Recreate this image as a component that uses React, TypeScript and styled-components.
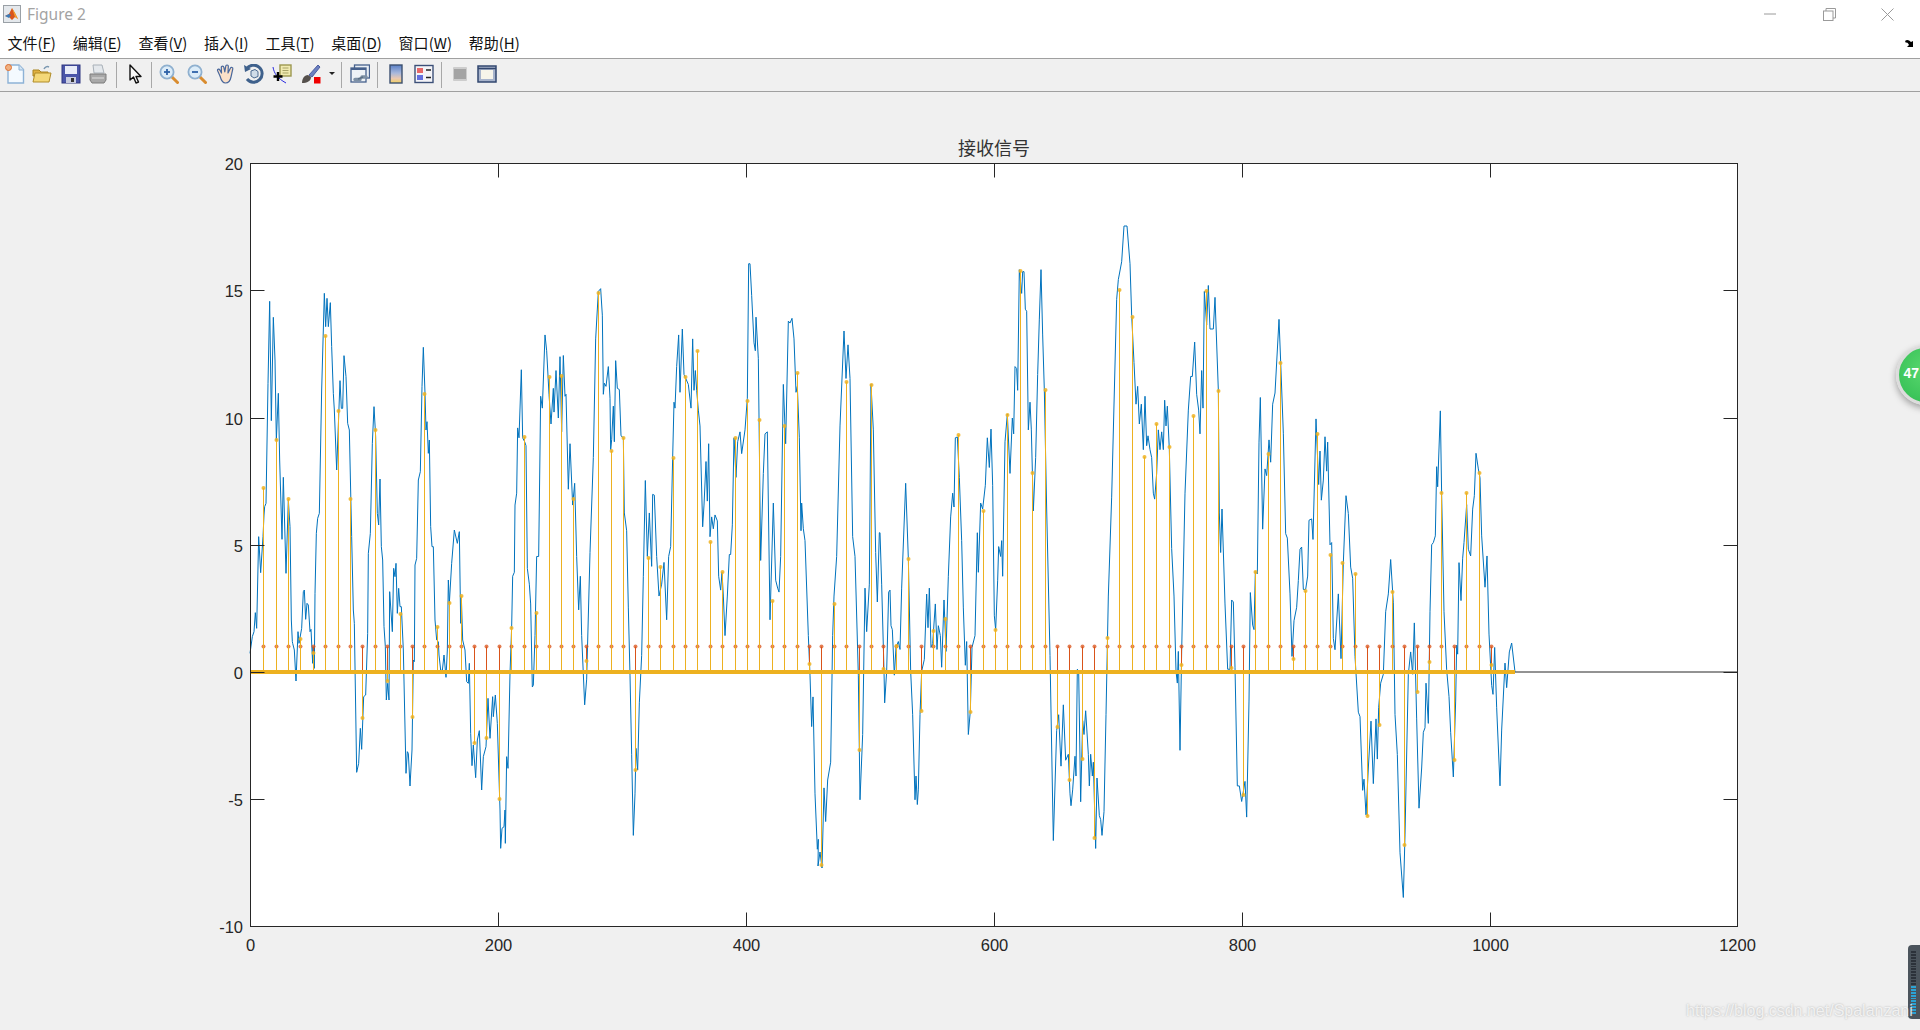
// App.tsx

import React from 'react';
import styled, { createGlobalStyle } from 'styled-components';

const GlobalStyle = createGlobalStyle`
  html, body {
    margin: 0;
    padding: 0;
    background: #f0f0f0;
    overflow: hidden;
  }
`;

const Window = styled.div`
  position: relative;
  width: 1920px;
  height: 1030px;
  overflow: hidden;
  display: flex;
  flex-direction: column;
  font-family: "Noto Sans", "Noto Sans CJK SC", sans-serif;
`;

const TitleBar = styled.div`
  height: 28px;
  background: #fff;
  display: flex;
  align-items: center;
  justify-content: space-between;
  padding: 0 3px;
`;

const TitleLeft = styled.div`
  display: flex;
  align-items: center;
  gap: 6px;
`;

const TitleText = styled.span`
  font-size: 15.500px;
  color: #a3a3a3;
`;

const Controls = styled.div`
  display: flex;
`;

const ControlButton = styled.div`
  width: 58.500px;
  height: 28px;
  display: flex;
  align-items: center;
  justify-content: center;
`;

const MenuBar = styled.div`
  height: 30px;
  box-sizing: content-box;
  background: #fff;
  border-bottom: 1px solid #a0a0a0;
  display: flex;
  align-items: center;
  justify-content: space-between;
  padding-right: 5px;
`;

const MenuList = styled.div`
  display: flex;
  margin-left: -1px;
  margin-top: -2px;
`;

const MenuItem = styled.span`
  padding: 0 8.400px;
  font-family: "Noto Sans CJK SC", sans-serif;
  font-size: 15px;
  color: #111;
  white-space: nowrap;

  u {
    text-underline-offset: 2px;
  }
`;

const Toolbar = styled.div`
  height: 32px;
  background: #f0f0f0;
  border-bottom: 1px solid #a0a0a0;
  display: flex;
  align-items: center;
`;

const Tool = styled.svg<{ $gap: number }>`
  width: 20px;
  height: 20px;
  margin-left: ${(p) => p.$gap}px;
  margin-bottom: 3px;
  flex: none;
`;

const DropArrow = styled.div<{ $gap: number }>`
  width: 0;
  height: 0;
  margin-left: ${(p) => p.$gap}px;
  margin-bottom: 3px;
  border-left: 3px solid transparent;
  border-right: 3px solid transparent;
  border-top: 3px solid #222;
`;

const Separator = styled.div<{ $gap: number }>`
  width: 1px;
  height: 26px;
  margin-left: ${(p) => p.$gap}px;
  background: #a8a8a8;
  flex: none;
`;

const FigureArea = styled.div`
  flex: 1;
  background: #f0f0f0;
`;

const Plot = styled.svg`
  display: block;
  width: 1920px;
  height: 938px;
`;

const TickLabel = styled.text`
  font-family: "Liberation Sans", sans-serif;
  font-size: 16.500px;
  fill: #262626;
`;

const PlotTitle = styled.text`
  font-family: "Noto Sans CJK SC", sans-serif;
  font-size: 18px;
  fill: #333;
  text-anchor: middle;
`;

const Badge = styled.div`
  position: absolute;
  left: 1896px;
  top: 345px;
  width: 60px;
  height: 60px;
  box-sizing: border-box;
  border-radius: 50%;
  border: 3px solid #dcdcdc;
  background: radial-gradient(circle at 50% 40%, #5ad86f, #3cc45a 70%, #33b04e);
  box-shadow: 0 3px 7px rgba(0, 0, 0, 0.35);
  color: #fff;
  font-family: "Liberation Sans", sans-serif;
  font-size: 14px;
  font-weight: bold;
  line-height: 51px;
  padding-left: 4.500px;
`;

const Meter = styled.div`
  position: absolute;
  left: 1908px;
  top: 945px;
  width: 20px;
  height: 74px;
  box-sizing: border-box;
  padding: 6px 12px 5px 3px;
  border-radius: 4px;
  background: #4b545c;
  display: flex;
  flex-direction: column;
  gap: 1px;
`;

const MeterCell = styled.div<{ $on: boolean }>`
  flex: 1;
  background: ${(p) => (p.$on ? '#2ba3d4' : '#2c323a')};
`;

const Watermark = styled.div`
  position: absolute;
  left: 1686px;
  top: 1002px;
  font-family: "Liberation Sans", sans-serif;
  font-size: 16px;
  color: rgba(255, 255, 255, 0.75);
  text-shadow: 0 0 2px rgba(120, 120, 120, 0.55);
  white-space: nowrap;
`;

// traced from the figure: crop origin + crop coordinates
type Pt = [number, number];
const seg = (ox: number, oy: number, sy: number, s: string): Pt[] =>
  s.split(' ').map((p) => {
    const [x, y] = p.split(',').map(Number);
    return [ox + x / 3, oy + y * sy];
  });
const abs = (s: string): Pt[] =>
  s.split(' ').map((p) => p.split(',').map(Number) as Pt);

const a = (s: string) => seg(240, 160, 1 / 3, s);
const b = (s: string) => seg(200, 600, 1 / 3, s);
const c = (s: string) => seg(480, 240, 0.3956, s);
const d = (s: string) => seg(860, 240, 0.3956, s);
const e = (s: string) => seg(1240, 210, 0.4464, s);

const signal: Pt[] = [
  ...a('30,1480 37,1430 42,1415 46,1358 50,1405 56,1130 62,1238 69,1130 72,1065 74,1040 78,1030 84,670 89,424 94,782 100,472 105,600 109,840 115,700 119,900 126,1138 130,952 138,1240 145,1020 150,1100 154,1380 157,1445'),
  ...b('278,130 283,150 288,243 294,95 297,130 305,85'),
  ...a('190,1295 193,1290 197,1378 201,1330 205,1335 210,1415 213,1408 218,1510'),
  ...b('339,140 343,205'),
  ...a('225,1300 229,1120 233,1075 238,1060 245,690 253,400 257,500 261,415 265,500 271,428 275,560 280,700 283,750 290,930 300,662 304,745 308,745 312,587 318,650 323,790 328,810 335,1130 340,1350 343,1390'),
  ...b('470,517 476,490 481,385 485,448 491,290 497,285 503,100'),
  ...a('385,1180 391,1120 397,850 402,740 407,830 412,1060 416,1095 420,957 424,1160 428,1200 432,1400 436,1460'),
  ...b('559,300 563,250 567,300'),
  ...a('449,1295 457,1415 461,1225 465,1250 468,1210 472,1360 476,1285 480,1340 484,1340 490,1470'),
  ...b('618,520 622,455 625,460 630,558 636,450 640,180 643,185'),
  ...a('525,1215 530,1195 535,960 541,935 546,680 550,562 555,700 558,810 561,785 565,880 568,840 572,1100 576,1160 580,1160 585,1380 590,1440'),
  ...b('715,125 717,165 722,210 727,212 732,165 738,232 742,150'),
  ...a('625,1260 628,1330 635,1210 643,1110 652,1150 658,1115 662,1390 664,1310 668,1440'),
  ...b('795,150 800,245 805,250 808,190 812,400 816,497 820,435 827,533 832,420 838,392 845,570 850,470 858,440 864,295 870,415 878,290 880,350 886,285 892,370 900,630 902,745 906,685 912,680 915,630 916,730 920,470 924,505 930,220 935,80'),
  ...c('98,850 103,840 105,670 110,640 113,475 117,500 124,328 128,500 134,510 138,520 142,830 148,870 152,920 157,1130 160,1125 165,1000 170,800 176,800 182,395 187,425 195,240 200,280 207,390 213,465 220,375 222,435 228,330 235,450 240,295 245,485 250,292 255,395 258,390 265,630 270,515 278,670 284,615 290,800 296,935 301,850 305,1000 314,1175 320,1110 330,790 340,550 347,250 355,130 362,123 367,190 370,390 373,362 378,370 385,320 390,400 392,530 395,505 400,420 403,510 407,305 412,375 418,378 423,495 430,500 433,690 440,735 445,930 450,1100 455,1300 460,1505 465,1400 468,1285 473,1340 478,1170 485,1050 490,850 496,608 502,800 508,690 515,825 518,643 523,645 530,800 537,900 545,870 552,815 560,960 566,800 572,775 578,550 582,410 585,425 590,320 596,240 600,385 607,225 612,340 625,365 633,425 638,250 642,380 646,330 650,380 655,430 660,470 668,725 672,670 678,560 682,660 686,515 690,750 695,700 700,730 705,695 712,710 716,850 722,885 726,840 730,900 735,1000 742,900 748,795 752,795 757,720 762,500 768,600 773,510 780,485 785,540 795,480 802,400 806,60 810,60 815,140 822,260 826,280 828,195 835,300 842,810 850,590 855,490 862,485 870,960 880,665 887,860 893,880 897,890 902,800 910,365 917,515 925,205 930,210 936,198 942,250 948,385 952,370 958,500 963,735 965,665 970,730 975,760 985,1000 990,1100 995,1230 999,1155 1005,1400 1012,1540 1015,1515'),
  ...abs('818,866 820,852 822,868'),
  ...c('1032,1385 1037,1470 1043,1365 1052,1320 1058,1000 1062,900 1070,800 1080,470 1092,230 1098,350 1104,265 1110,350 1118,750 1125,800 1135,1100 1140,1415 1148,1250 1155,880 1160,990 1168,870'),
  ...d('33,365 40,480 47,790 52,915 58,740 60,740 65,870 72,1090 74,1170 80,1090 86,890 90,885 93,975 97,985 103,1100 108,1030 115,1015 120,1035 125,880 137,615 145,805 152,1090 158,1200 165,1415 168,1355 172,1427 175,1390 180,1200 185,1090 193,1060 200,895 204,980 208,880 213,1030 218,1020 226,920 231,1035 235,975 241,1000 245,1080 252,910 258,1040 265,850 272,700 278,640 282,675 286,500 292,498 298,600 305,760 310,930 316,1075 320,1015 325,1250 331,1190 336,1030 345,1000 352,740 355,840 362,665 368,680 376,620 382,500 388,575 393,478 398,620 403,950 407,985 413,860 416,775 422,800 425,760 428,850 435,510 442,440 450,590 457,450 461,490 465,320 470,325 473,380 478,75 485,135 488,80 492,80 496,175 500,180 505,480 510,410 514,480 520,685 527,550 533,340 538,200 543,75 548,240 553,380 560,680 570,1050 580,1518 590,1240 596,1200 603,1330 610,1175 617,1315 625,1300 630,1400 633,1430 638,1390 645,1305 648,1355 652,1085 656,1090 662,1420 668,1215 672,1250 677,1190 685,1300 688,1380 692,1300 697,1355 700,1320 707,1538 711,1360 718,1455 722,1465 726,1505 732,1445 738,1200 745,900 755,650 770,150 775,100 785,55'),
  ...abs('1124,226 1127,226'),
  ...d('810,60 815,190 822,310 828,415 833,370 838,465 844,415 850,530 855,395 860,520 864,495 870,530 875,550 880,640 884,655 890,590 895,480 900,530 905,485 910,530 914,405 918,470 922,420 928,530 935,780 942,900 948,1090 952,1120 955,1040 960,1290 965,1040 975,640 985,430 992,345 997,345 1004,258 1010,390 1016,430 1020,490 1025,330 1029,425 1033,130 1040,215 1045,115 1050,225 1060,225 1065,145 1075,380 1078,690 1082,790 1086,680 1095,920 1103,1085 1110,1085 1115,910 1120,915 1125,1080 1132,1380 1138,1380'),
  ...e('5,1325 15,1280 20,1360 27,1100 31,857 38,930 42,940 46,810 52,815 57,520 61,420 68,715 75,580 80,595 87,515 92,565 98,435 105,410 117,245 122,340 130,500 137,725 142,735 150,860 156,1000 162,920 170,890 175,830 180,760 185,755 190,850 197,850 203,820 207,695 215,692 219,738 228,468 236,615 240,540 244,650 250,605 255,508 260,585 263,520 270,750 275,745 280,960 285,985 295,860 303,1005 310,790 318,640 325,680 332,800 338,825 345,1000 355,1125 360,1135 368,1300 372,1275 378,1355 385,1250 393,1145 400,1285 408,1140 412,1230 416,1115 422,1060 430,1040 437,900 445,860 452,783 460,880 465,1130 472,1220 480,1440 490,1540 495,1400 505,1040 512,990 518,1040 523,925 530,1140 537,1340 545,1250 550,1170 555,1160 558,1060 565,1150 570,900 575,750 580,745 586,730 590,575 593,620 601,450 605,640 612,900 620,1030 627,1090 632,1170 640,1270 647,1100 650,975 653,995 657,790 663,875 668,780 672,745 680,660 685,760 692,775 698,670 703,640 708,545 715,580 720,600 725,730 735,845 741,775 747,950 755,1065 759,1085 764,980 770,1115 780,1290 785,1165 795,1015 800,1070 808,990 815,970 825,1035'),
];

// received samples at each symbol position (x, y in page pixels)
const samples: Pt[] = abs(
  '263,488 276,440 288,499 300,639 313,653 325,336 338,411 350,499 362,718 375,430 387,681 400,614 412,717 424,394 437,627 449,603 461,596 474,743 486,738 499,799 511,628 524,437 536,613 549,377 561,376 573,499 586,661 598,293 611,451 623,438 635,770 648,558 660,567 673,458 685,377 697,351 710,542 722,572 735,438 747,401 759,420 772,601 784,426 797,373 809,664 821,865 834,604 846,382 859,750 871,385 883,669 896,646 908,559 921,711 933,631 945,619 958,435 970,712 983,511 995,630 1007,415 1020,271 1032,473 1045,390 1057,727 1069,780 1082,759 1094,838 1107,638 1119,290 1132,317 1144,457 1156,424 1169,447 1181,665 1193,416 1206,291 1218,391 1231,668 1243,795 1255,572 1268,454 1280,363 1293,659 1305,591 1317,434 1330,555 1342,563 1355,574 1367,816 1379,725 1392,592 1404,845 1417,692 1429,662 1441,493 1454,760 1466,493 1479,473 1491,665'
);

const X_LEFT = 250.5;
const X_RIGHT = 1737.5;
const Y_TOP = 163.5;
const Y_BOTTOM = 926.5;
const Y_ZERO = 672;
const Y_ONE = 646.6;
const DATA_END = 1515;

const xTicks = [0, 200, 400, 600, 800, 1000, 1200];
const yTicks = [20, 15, 10, 5, 0, -5, -10];
const xPos = (v: number) => Math.round(X_LEFT + v * 1.239) + 0.5;
const yPos = (v: number) => Math.round(Y_ZERO - v * 25.44) + 0.5;

const SignalPlot: React.FC = () => (
  <Plot viewBox="0 92 1920 938">
    <rect x={X_LEFT} y={Y_TOP} width={X_RIGHT - X_LEFT} height={Y_BOTTOM - Y_TOP} fill="#fff" />
    <line x1={DATA_END} x2={X_RIGHT} y1={Y_ZERO} y2={Y_ZERO} stroke="#262626" strokeWidth="1" />
    <polyline
      points={signal.map((p) => p.join(',')).join(' ')}
      fill="none"
      stroke="#0072bd"
      strokeWidth="1"
      strokeLinejoin="round"
    />
    {samples.map(([x], i) => (
      <g key={i}>
        <line x1={x + 0.5} x2={x + 0.5} y1={Y_ZERO} y2={Y_ONE} stroke="#d95319" strokeWidth="1" />
        <circle cx={x + 0.5} cy={Y_ONE} r="2" fill="#d95319" fillOpacity="0.75" />
      </g>
    ))}
    {samples.map(([x, y], i) => (
      <g key={i}>
        <line x1={x + 0.5} x2={x + 0.5} y1={Y_ZERO} y2={y} stroke="#edb120" strokeWidth="1" />
        <circle cx={x + 0.5} cy={y} r="2" fill="#edb120" fillOpacity="0.85" />
      </g>
    ))}
    <line x1={X_LEFT} x2={DATA_END} y1={Y_ZERO} y2={Y_ZERO} stroke="#edb120" strokeWidth="4" />
    <rect
      x={X_LEFT}
      y={Y_TOP}
      width={X_RIGHT - X_LEFT}
      height={Y_BOTTOM - Y_TOP}
      fill="none"
      stroke="#262626"
      strokeWidth="1"
    />
    {xTicks.slice(1, -1).map((v) => (
      <path
        key={v}
        d={`M${xPos(v)} ${Y_TOP}v14M${xPos(v)} ${Y_BOTTOM}v-14`}
        stroke="#262626"
        fill="none"
      />
    ))}
    {yTicks.slice(1, -1).map((v) => (
      <path
        key={v}
        d={`M${X_LEFT} ${yPos(v)}h14M${X_RIGHT} ${yPos(v)}h-14`}
        stroke="#262626"
        fill="none"
      />
    ))}
    {xTicks.map((v) => (
      <TickLabel key={v} x={v === 0 ? xPos(v) - 1 : xPos(v)} y={951} textAnchor="middle">
        {v}
      </TickLabel>
    ))}
    {yTicks.map((v) => (
      <TickLabel key={v} x={243} y={yPos(v) + 6} textAnchor="end">
        {v}
      </TickLabel>
    ))}
    <PlotTitle x={994} y={155}>
      接收信号
    </PlotTitle>
  </Plot>
);

const menus = [
  ['文件', 'F'],
  ['编辑', 'E'],
  ['查看', 'V'],
  ['插入', 'I'],
  ['工具', 'T'],
  ['桌面', 'D'],
  ['窗口', 'W'],
  ['帮助', 'H'],
];

const Lens: React.FC<{ plus?: boolean }> = ({ plus }) => (
  <>
    <path d="M12.500 12.500l6 6" stroke="#d98c2e" strokeWidth="3" strokeLinecap="round" />
    <circle cx="8" cy="8" r="6.600" fill="#dcecf8" stroke="#8fb0cf" strokeWidth="1.800" />
    <path d="M5 8h6" stroke="#2e62a8" strokeWidth="1.800" />
    {plus && <path d="M8 5v6" stroke="#2e62a8" strokeWidth="1.800" />}
  </>
);

const FigureToolbar: React.FC = () => (
  <Toolbar>
    <Tool $gap={5} viewBox="0 0 20 20">
      <path d="M3 1h11l4.500 4.500V19H3z" fill="#f4faff" stroke="#8db2d6" strokeWidth="1.400" />
      <path d="M14 1v5h4.500" fill="#d4e4f2" stroke="#8db2d6" />
      <circle cx="3.500" cy="3.500" r="3" fill="#f0b080" stroke="#e07030" />
    </Tool>
    <Tool $gap={7} viewBox="0 0 20 20">
      <path d="M12 5c1-2 3-3 5-2" fill="none" stroke="#7a97b0" strokeWidth="1.500" />
      <path d="M1 6h6l2 2h7v4H1z" fill="#e0b040" stroke="#a88420" />
      <path d="M1 18l2-9h16l-2 9z" fill="#f4d878" stroke="#b08c28" />
    </Tool>
    <Tool $gap={9} viewBox="0 0 20 20">
      <rect x="1" y="1" width="18" height="18" fill="#4a55a8" stroke="#2e3680" />
      <rect x="4" y="2" width="12" height="8" fill="#e8ecf8" />
      <rect x="5" y="13" width="10" height="6" fill="#c8cce0" />
      <rect x="10" y="14" width="3" height="4" fill="#333" />
    </Tool>
    <Tool $gap={7} viewBox="0 0 20 20">
      <path d="M5 1h9l2 8H6z" fill="#e4e8ec" stroke="#a8b0b8" />
      <path d="M2 10h16v6l-2 3H4l-2-3z" fill="#a8a8a8" stroke="#7c7c7c" />
      <path d="M4 14h12" stroke="#e0e0e0" />
    </Tool>
    <Separator $gap={8} />
    <Tool $gap={8} viewBox="0 0 20 20">
      <path
        d="M5 1v15l3.500-3 2.500 6 2.500-1-2.500-5.500h5z"
        fill="#f8f8f8"
        stroke="#111"
        strokeWidth="1.400"
        strokeLinejoin="round"
      />
    </Tool>
    <Separator $gap={6} />
    <Tool $gap={7} viewBox="0 0 20 20">
      <Lens plus />
    </Tool>
    <Tool $gap={8} viewBox="0 0 20 20">
      <Lens />
    </Tool>
    <Tool $gap={9} viewBox="0 0 20 20">
      <path
        d="M4 12L1.500 6.500c-.3-1.500 1.700-2 2.300-.6L5.500 9 5.300 3.200c0-1.500 2.400-1.500 2.500 0L8.800 8 9.800 2c.2-1.500 2.600-1.200 2.500.3L12 9l2.500-5c.7-1.200 2.700-.5 2.300.9L15 13c-.7 3.500-2.200 6-5.500 6-2.700 0-4-1.500-5.500-7z"
        fill="#fbe0c8"
        stroke="#48679c"
        strokeWidth="1.200"
        strokeLinejoin="round"
      />
    </Tool>
    <Tool $gap={8} viewBox="0 0 20 20">
      <path d="M2.500 5A8.500 8.500 0 1 1 3 15" fill="none" stroke="#3f618c" strokeWidth="3" />
      <path d="M0 1l1 7 6-3z" fill="#3f618c" />
      <path d="M7 7l4-1.500 3 2v5l-4 1.500-3-2z" fill="#d0dce8" stroke="#4c6a90" />
    </Tool>
    <Tool $gap={8} viewBox="0 0 20 20">
      <path d="M1 3c1 6 4 11 13 16" fill="none" stroke="#2a2ae0" strokeWidth="1" />
      <rect x="8" y="1" width="11" height="11" fill="#f0eab0" stroke="#9c9850" strokeWidth="1.400" />
      <path d="M10.500 4h6M10.500 6.500h6M10.500 9h6" stroke="#a8a468" />
      <path d="M6 8v9M1.500 12.500h9" stroke="#000" strokeWidth="2.400" />
    </Tool>
    <Tool $gap={9} viewBox="0 0 20 20">
      <path d="M8 11l9-10 2 2-8 10z" fill="#6c80c0" stroke="#4a5ca0" />
      <path d="M1 19c0-4 2-8 6-8l3 2c0 4-4 6-9 6z" fill="#55504c" />
      <rect x="13" y="13" width="6.500" height="6.500" fill="#f00000" />
    </Tool>
    <DropArrow $gap={8} />
    <Separator $gap={6} />
    <Tool $gap={8} viewBox="0 0 20 20">
      <rect x="4.500" y="1" width="15" height="13" fill="#e8eef4" stroke="#46608c" strokeWidth="1.300" />
      <rect x="1" y="4" width="15" height="14" fill="#eef2f6" stroke="#46608c" strokeWidth="1.300" />
      <path d="M1 4h15v2H1z" fill="#46608c" />
      <path d="M5 15.500h5M12 13h4" stroke="#7d90a4" strokeWidth="3.500" strokeLinecap="round" />
      <path d="M8 15l5-2" stroke="#5c7086" strokeWidth="1.500" />
    </Tool>
    <Separator $gap={7} />
    <Tool $gap={8} viewBox="0 0 20 20">
      <defs>
        <linearGradient id="cbar" x1="0" y1="0" x2="0" y2="1">
          <stop offset="0" stopColor="#5a80c8" />
          <stop offset="0.45" stopColor="#a8b8dc" />
          <stop offset="0.75" stopColor="#eac8b0" />
          <stop offset="1" stopColor="#f0d060" />
        </linearGradient>
      </defs>
      <rect x="4" y="1" width="12" height="18" fill="url(#cbar)" stroke="#3c5070" strokeWidth="1.400" />
    </Tool>
    <Tool $gap={8} viewBox="0 0 20 20">
      <rect x="1" y="1.500" width="18" height="17" fill="#f4f4f8" stroke="#3c5078" strokeWidth="1.400" />
      <rect x="3" y="4" width="6" height="5" fill="#e86868" />
      <rect x="3" y="11" width="6" height="5" fill="#6470e0" />
      <path d="M12 6h5M12 13.500h5" stroke="#222" strokeWidth="1.400" />
    </Tool>
    <Separator $gap={7} />
    <Tool $gap={8} viewBox="0 0 20 20">
      <rect x="3" y="3" width="14" height="14" rx="1" fill="#cdcdcd" />
      <rect x="4" y="5" width="12" height="10" fill="#a4a4a4" />
    </Tool>
    <Tool $gap={7} viewBox="0 0 20 20">
      <rect x="1" y="2" width="18" height="16" fill="#a8b4cc" stroke="#32476f" strokeWidth="1.500" />
      <rect x="4" y="6" width="12" height="9" fill="#f6f4ea" />
      <path d="M1 4.500h18" stroke="#32476f" strokeWidth="1.500" />
    </Tool>
  </Toolbar>
);

export default function App() {
  return (
    <Window>
      <GlobalStyle />
      <TitleBar>
        <TitleLeft>
          <svg width="18" height="18" viewBox="0 0 18 18">
            <rect x="0.500" y="0.500" width="17" height="17" fill="#e4e8ec" stroke="#9aa0a6" />
            <path d="M2 11l4-2 3-6 3 5 3 6-3-2-3 3-3-3z" fill="#d9541c" />
            <path d="M2 11l4-2 2 1-2 3z" fill="#3d7cb8" />
            <path d="M9 3l3 5 3 6-3-2z" fill="#f0a030" />
          </svg>
          <TitleText>Figure 2</TitleText>
        </TitleLeft>
        <Controls>
          <ControlButton>
            <svg width="13" height="2" viewBox="0 0 13 2">
              <path d="M0 1h12" stroke="#9a9a9a" />
            </svg>
          </ControlButton>
          <ControlButton>
            <svg width="13" height="13" viewBox="0 0 13 13">
              <path d="M3 3V.5h9.500V10H10" fill="none" stroke="#9a9a9a" />
              <rect x="0.500" y="3" width="9.500" height="9.500" fill="none" stroke="#9a9a9a" />
            </svg>
          </ControlButton>
          <ControlButton>
            <svg width="13" height="13" viewBox="0 0 13 13">
              <path d="M.5.500l12 12M12.500.5l-12 12" stroke="#9a9a9a" />
            </svg>
          </ControlButton>
        </Controls>
      </TitleBar>
      <MenuBar>
        <MenuList>
          {menus.map(([label, key]) => (
            <MenuItem key={key}>
              {label}(<u>{key}</u>)
            </MenuItem>
          ))}
        </MenuList>
        <svg width="10" height="9" viewBox="0 0 10 9">
          <path d="M0 2c2-2 4-1 6 1l2-1v6H2l2-2C3 4 2 3 1 4z" fill="#000" />
        </svg>
      </MenuBar>
      <FigureToolbar />
      <FigureArea>
        <SignalPlot />
      </FigureArea>
      <Badge>47</Badge>
      <Meter>
        {Array.from({ length: 22 }, (_, i) => (
          <MeterCell key={i} $on={i >= 12} />
        ))}
      </Meter>
      <Watermark>https://blog.csdn.net/Spalanzani</Watermark>
    </Window>
  );
}
